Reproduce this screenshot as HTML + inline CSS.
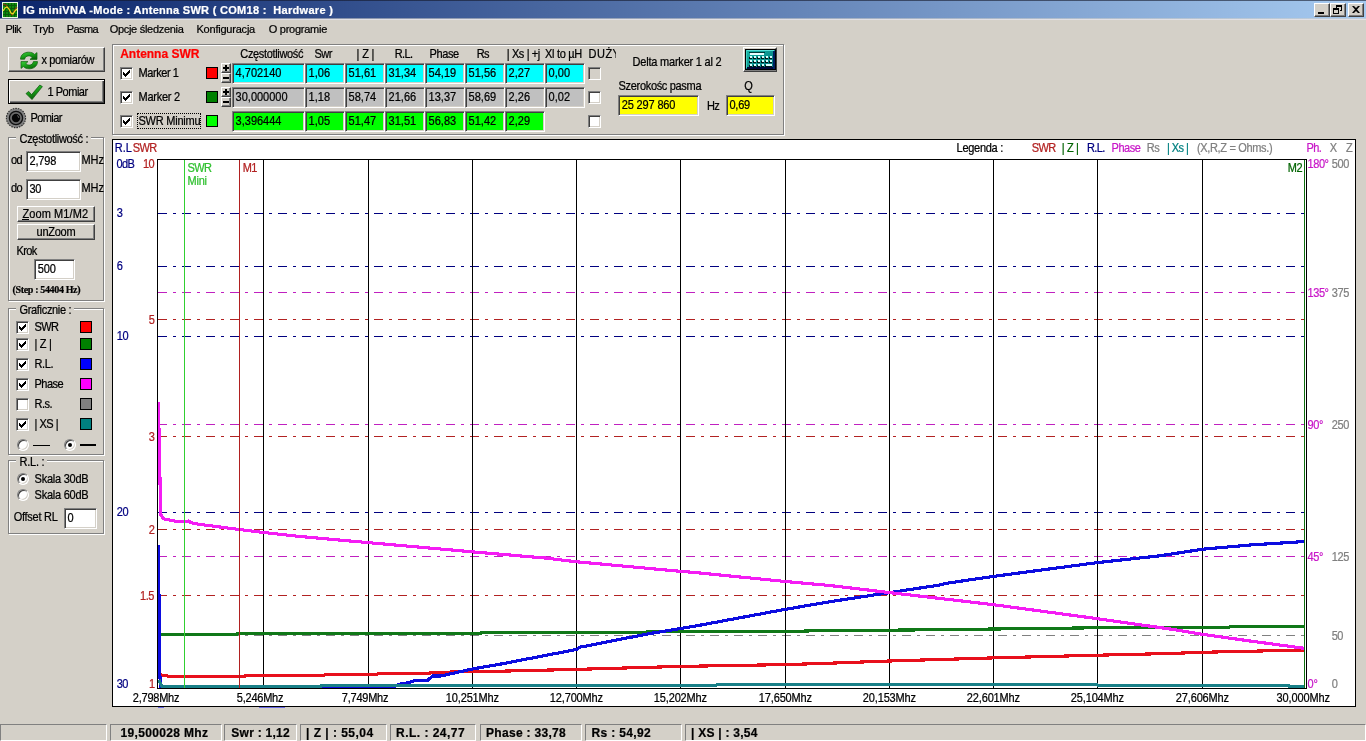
<!DOCTYPE html>
<html><head><meta charset="utf-8"><title>IG miniVNA</title>
<style>
html,body{margin:0;padding:0}
body{width:1366px;height:741px;overflow:hidden;position:relative;background:#d4d0c8;font-family:"Liberation Sans",sans-serif;font-size:11px}
body>div{position:absolute;box-sizing:border-box}
span.t{position:absolute;white-space:pre;-webkit-text-stroke:0.22px}
span.s{transform:scaleY(1.125);transform-origin:0 9px}
#title{left:0;top:0;width:1366px;height:18px;background:linear-gradient(to right,#0a246a 0%,#a6caf0 100%);border-top:1px solid rgba(20,24,40,.6)}
.capbtn{width:16px;height:14px;background:#d4d0c8;border:1px solid;border-color:#fff #404040 #404040 #fff;box-shadow:inset -1px -1px 0 #808080}
.capbtn svg{position:absolute;left:1px;top:1px}
.btn{background:#d4d0c8;border:1px solid;border-color:#fff #404040 #404040 #fff;box-shadow:inset -1px -1px 0 #808080,inset 1px 1px 0 #d4d0c8}
.btn.dflt{border:1px solid #000;box-shadow:inset 1px 1px 0 #fff,inset -1px -1px 0 #404040,inset -2px -2px 0 #808080}
.btn.thin{box-shadow:inset -1px -1px 0 #808080}
.edit,.fld{background:#fff;border:1px solid;border-color:#808080 #fff #fff #808080;box-shadow:inset 1px 1px 0 #404040,inset -1px -1px 0 #d4d0c8}
.grp,.etch{border:1px solid #808080;box-shadow:1px 1px 0 #fff,inset 1px 1px 0 #fff}
.grplblbg{background:#d4d0c8}
.cb{width:13px;height:13px;background:#fff;border:1px solid;border-color:#808080 #fff #fff #808080;box-shadow:inset 1px 1px 0 #404040,inset -1px -1px 0 #d4d0c8}
.cb.dis{background:#d4d0c8}
.cb svg{position:absolute;left:2px;top:2px}
.sw{width:12px;height:12px;border:1px solid #000}
.radio{width:12px;height:12px;border-radius:50%;background:#fff;border:1px solid;border-color:#808080 #fff #fff #808080;box-shadow:inset 1px 1px 0 #404040,inset -1px -1px 0 #d4d0c8}
.radio .dot{position:absolute;left:3px;top:3px;width:4px;height:4px;border-radius:50%;background:#000}
.spin{width:10px;height:20px}
.spin .sb{position:relative;box-sizing:border-box;width:10px;height:10px;background:#d4d0c8;border:1px solid;border-color:#fff #404040 #404040 #fff;box-shadow:inset -1px -1px 0 #808080}
.spin i{position:absolute;background:#000;display:block}
.spin i.ph{left:1px;top:3px;width:6px;height:2px}
.spin i.pv{left:3px;top:1px;width:2px;height:6px}
.focus{border:1px dotted #000}
.sp{border:1px solid;border-color:#808080 #fff #fff #808080}
.calc{width:34px;height:25px;background:#d4d0c8;border:1px solid;border-color:#fff #404040 #404040 #fff;box-shadow:inset -1px -1px 0 #808080}
#chart{position:absolute;left:112px;top:139px}
#title2{left:0;top:18px;width:1366px;height:1px;background:linear-gradient(to right,#0a246a 0%,#a6caf0 100%);opacity:.45}
#title3{left:0;top:19px;width:1366px;height:1px;background:#e2e0e4}
#tx{left:0;top:0;width:1366px;height:741px;will-change:transform}

</style></head>
<body>
<div id="title"></div><div id="title2"></div><div id="title3"></div>
<svg id="appicon" width="16" height="16" viewBox="0 0 16 16" style="position:absolute;left:2px;top:2px">
<rect x="0" y="0" width="16" height="16" fill="#0c8a0c"/>
<g stroke="#0a5a0a" stroke-width="1"><path d="M3.5 0V16M6.5 0V16M9.5 0V16M12.5 0V16M0 3.5H16M0 6.5H16M0 9.5H16M0 12.5H16"/></g>
<rect x="0.5" y="0.5" width="15" height="15" fill="none" stroke="#e8f8e0"/>
<path d="M1 2 L4 3 L7 7 L10 13 L12 9 L15 5" fill="none" stroke="#8a3a10" stroke-width="1.2"/>
<path d="M1 9 L3 6 L5 5 L7 7 L9 11 L11 12 L13 9 L15 7" fill="none" stroke="#e8e020" stroke-width="1.2"/>
</svg>
<div class="capbtn" style="left:1314px;top:3px"><svg width="12" height="10" viewBox="0 0 12 10"><rect x="2" y="7" width="6" height="2" fill="#000"/></svg></div>
<div class="capbtn" style="left:1330px;top:3px"><svg width="12" height="10" viewBox="0 0 12 10"><path d="M4 0h6v6h-2v-1h1v-3h-4v1h-1z" fill="#000"/><path d="M1 3h6v6h-6z M2 5v3h4v-3z" fill="#000" fill-rule="evenodd"/></svg></div>
<div class="capbtn" style="left:1348px;top:3px"><svg width="12" height="10" viewBox="0 0 12 10"><path d="M2 1h2l2 2 2-2h2l-3 3.5 3 3.5h-2l-2-2-2 2h-2l3-3.5z" fill="#000"/></svg></div>
<div class="btn" style="left:8px;top:47px;width:97px;height:25px;"></div>
<div class="btn dflt" style="left:8px;top:79px;width:97px;height:25px;"></div>
<div class="grp" style="left:8px;top:137px;width:96px;height:164px"></div>
<div class="grplblbg" style="left:16.0px;top:137px;width:75px;height:2px"></div>
<div class="grp" style="left:8px;top:308px;width:96px;height:147px"></div>
<div class="grplblbg" style="left:16.0px;top:308px;width:58px;height:2px"></div>
<div class="grp" style="left:8px;top:460px;width:96px;height:74px"></div>
<div class="grplblbg" style="left:16.0px;top:460px;width:31px;height:2px"></div>
<div class="edit" style="left:26px;top:151px;width:55px;height:21px;"></div>
<div class="edit" style="left:26px;top:179px;width:55px;height:21px;"></div>
<div class="btn thin" style="left:17px;top:206px;width:78px;height:16px;"></div>
<div class="btn thin" style="left:17px;top:224px;width:78px;height:16px;"></div>
<div style="position:absolute;left:22px;top:219px;width:7px;height:1px;background:#000"></div>
<div class="edit" style="left:34px;top:259px;width:41px;height:21px;"></div>
<div class="cb" style="left:16px;top:321px"><svg width="7" height="7" viewBox="0 0 7 7" shape-rendering="crispEdges"><path d="M0 2h1v1h1v1h1v-1h1v-1h1v-1h1v-1h1v3h-1v1h-1v1h-1v1h-1v1h-1v-1h-1v-1h-1z" fill="#000"/></svg></div>
<div class="sw" style="left:80px;top:321px;background:#ff0000"></div>
<div class="cb" style="left:16px;top:338px"><svg width="7" height="7" viewBox="0 0 7 7" shape-rendering="crispEdges"><path d="M0 2h1v1h1v1h1v-1h1v-1h1v-1h1v-1h1v3h-1v1h-1v1h-1v1h-1v1h-1v-1h-1v-1h-1z" fill="#000"/></svg></div>
<div class="sw" style="left:80px;top:338px;background:#008000"></div>
<div class="cb" style="left:16px;top:358px"><svg width="7" height="7" viewBox="0 0 7 7" shape-rendering="crispEdges"><path d="M0 2h1v1h1v1h1v-1h1v-1h1v-1h1v-1h1v3h-1v1h-1v1h-1v1h-1v1h-1v-1h-1v-1h-1z" fill="#000"/></svg></div>
<div class="sw" style="left:80px;top:358px;background:#0000ff"></div>
<div class="cb" style="left:16px;top:378px"><svg width="7" height="7" viewBox="0 0 7 7" shape-rendering="crispEdges"><path d="M0 2h1v1h1v1h1v-1h1v-1h1v-1h1v-1h1v3h-1v1h-1v1h-1v1h-1v1h-1v-1h-1v-1h-1z" fill="#000"/></svg></div>
<div class="sw" style="left:80px;top:378px;background:#ff00ff"></div>
<div class="cb" style="left:16px;top:398px"></div>
<div class="sw" style="left:80px;top:398px;background:#808080"></div>
<div class="cb" style="left:16px;top:418px"><svg width="7" height="7" viewBox="0 0 7 7" shape-rendering="crispEdges"><path d="M0 2h1v1h1v1h1v-1h1v-1h1v-1h1v-1h1v3h-1v1h-1v1h-1v1h-1v1h-1v-1h-1v-1h-1z" fill="#000"/></svg></div>
<div class="sw" style="left:80px;top:418px;background:#008080"></div>
<div class="radio" style="left:17px;top:439px"></div>
<div class="radio" style="left:64px;top:439px"><div class="dot"></div></div>
<div style="position:absolute;left:33px;top:445px;width:17px;height:1px;background:#000"></div>
<div style="position:absolute;left:80px;top:444px;width:16px;height:2px;background:#000"></div>
<div class="radio" style="left:17px;top:473px"><div class="dot"></div></div>
<div class="radio" style="left:17px;top:489px"></div>
<div class="edit" style="left:64px;top:508px;width:33px;height:21px;"></div>
<svg width="22" height="22" viewBox="0 0 22 22" style="position:absolute;left:5px;top:107px">
<circle cx="11" cy="11" r="9.6" fill="#828282" stroke="#2c2c2c" stroke-width="1.1" stroke-dasharray="1.6 1"/>
<circle cx="11" cy="11" r="6.6" fill="#6c6c6c" stroke="#101010" stroke-width="1.3"/>
<circle cx="11" cy="11" r="4.2" fill="#060606"/>
<path d="M12.2 8.6a2.6 2.6 0 0 1 1.6 2.2" stroke="#7a7a7a" stroke-width="0.9" fill="none"/>
</svg>
<svg width="20" height="19" viewBox="0 0 20 19" style="position:absolute;left:18.5px;top:50.5px">
<defs><linearGradient id="rg" x1="0" y1="0" x2="0.6" y2="1"><stop offset="0" stop-color="#3fd23f"/><stop offset="0.55" stop-color="#18a018"/><stop offset="1" stop-color="#0a6a0a"/></linearGradient></defs>
<path d="M1.5 8.2 C1.5 3.8 5.2 1.2 9.6 1.2 C12.2 1.2 14.2 2 15.6 3.4 L18 1.6 V8.4 H11 L13.2 6.4 C12.3 5.4 11.2 4.9 9.8 4.9 C7.6 4.9 6 6.1 5.6 8.2 Z" fill="url(#rg)" stroke="#0b5f0b" stroke-width="0.7"/>
<path d="M18.5 10.6 C18.5 15 14.8 17.8 10.4 17.8 C7.8 17.8 5.8 17 4.4 15.6 L2 17.4 V10.6 H9 L6.8 12.6 C7.7 13.6 8.8 14.1 10.2 14.1 C12.4 14.1 14 12.9 14.4 10.6 Z" fill="url(#rg)" stroke="#0b5f0b" stroke-width="0.7"/>
</svg>
<svg width="19" height="17" viewBox="0 0 19 17" style="position:absolute;left:25px;top:83.5px">
<defs><linearGradient id="kg" x1="0" y1="0" x2="0.3" y2="1"><stop offset="0" stop-color="#35c835"/><stop offset="0.6" stop-color="#169616"/><stop offset="1" stop-color="#0a5c0a"/></linearGradient></defs>
<path d="M1 9.6 L3.6 7.4 L6.6 10.6 L14.8 1 L17.4 2.6 L7 15.6 Z" fill="url(#kg)" stroke="#0a520a" stroke-width="0.7"/>
</svg>
<div class="etch" style="left:112px;top:44px;width:672px;height:91px"></div>
<div style="position:absolute;left:588px;top:46px;width:28px;height:14px;overflow:hidden"></div>
<div class="cb" style="left:120px;top:67px"><svg width="7" height="7" viewBox="0 0 7 7" shape-rendering="crispEdges"><path d="M0 2h1v1h1v1h1v-1h1v-1h1v-1h1v-1h1v3h-1v1h-1v1h-1v1h-1v1h-1v-1h-1v-1h-1z" fill="#000"/></svg></div>
<div class="sw" style="left:206px;top:67px;background:#ff0000"></div>
<div class="spin" style="left:221px;top:63px"><div class="sb"><i class="ph"></i><i class="pv"></i></div><div class="sb"><i class="ph"></i></div></div>
<div class="fld" style="left:232px;top:63px;width:73px;height:21px;background:#00ffff"></div>
<div class="fld" style="left:305px;top:63px;width:40px;height:21px;background:#00ffff"></div>
<div class="fld" style="left:345px;top:63px;width:40px;height:21px;background:#00ffff"></div>
<div class="fld" style="left:385px;top:63px;width:40px;height:21px;background:#00ffff"></div>
<div class="fld" style="left:425px;top:63px;width:40px;height:21px;background:#00ffff"></div>
<div class="fld" style="left:465px;top:63px;width:40px;height:21px;background:#00ffff"></div>
<div class="fld" style="left:505px;top:63px;width:40px;height:21px;background:#00ffff"></div>
<div class="fld" style="left:545px;top:63px;width:40px;height:21px;background:#00ffff"></div>
<div class="cb dis" style="left:588px;top:67px"></div>
<div class="cb" style="left:120px;top:91px"><svg width="7" height="7" viewBox="0 0 7 7" shape-rendering="crispEdges"><path d="M0 2h1v1h1v1h1v-1h1v-1h1v-1h1v-1h1v3h-1v1h-1v1h-1v1h-1v1h-1v-1h-1v-1h-1z" fill="#000"/></svg></div>
<div class="sw" style="left:206px;top:91px;background:#008000"></div>
<div class="spin" style="left:221px;top:87px"><div class="sb"><i class="ph"></i><i class="pv"></i></div><div class="sb"><i class="ph"></i></div></div>
<div class="fld" style="left:232px;top:87px;width:73px;height:21px;background:#c0c0c0"></div>
<div class="fld" style="left:305px;top:87px;width:40px;height:21px;background:#c0c0c0"></div>
<div class="fld" style="left:345px;top:87px;width:40px;height:21px;background:#c0c0c0"></div>
<div class="fld" style="left:385px;top:87px;width:40px;height:21px;background:#c0c0c0"></div>
<div class="fld" style="left:425px;top:87px;width:40px;height:21px;background:#c0c0c0"></div>
<div class="fld" style="left:465px;top:87px;width:40px;height:21px;background:#c0c0c0"></div>
<div class="fld" style="left:505px;top:87px;width:40px;height:21px;background:#c0c0c0"></div>
<div class="fld" style="left:545px;top:87px;width:40px;height:21px;background:#c0c0c0"></div>
<div class="cb" style="left:588px;top:91px"></div>
<div class="cb" style="left:120px;top:115px"><svg width="7" height="7" viewBox="0 0 7 7" shape-rendering="crispEdges"><path d="M0 2h1v1h1v1h1v-1h1v-1h1v-1h1v-1h1v3h-1v1h-1v1h-1v1h-1v1h-1v-1h-1v-1h-1z" fill="#000"/></svg></div>
<div class="sw" style="left:206px;top:115px;background:#00ff00"></div>
<div class="fld" style="left:232px;top:111px;width:73px;height:21px;background:#00ff00"></div>
<div class="fld" style="left:305px;top:111px;width:40px;height:21px;background:#00ff00"></div>
<div class="fld" style="left:345px;top:111px;width:40px;height:21px;background:#00ff00"></div>
<div class="fld" style="left:385px;top:111px;width:40px;height:21px;background:#00ff00"></div>
<div class="fld" style="left:425px;top:111px;width:40px;height:21px;background:#00ff00"></div>
<div class="fld" style="left:465px;top:111px;width:40px;height:21px;background:#00ff00"></div>
<div class="fld" style="left:505px;top:111px;width:40px;height:21px;background:#00ff00"></div>
<div class="cb" style="left:588px;top:115px"></div>
<div class="focus" style="left:137px;top:113px;width:64px;height:16px"></div>
<div class="fld" style="left:618px;top:95px;width:81px;height:21px;background:#ffff00"></div>
<div class="fld" style="left:726px;top:95px;width:49px;height:21px;background:#ffff00"></div>
<div class="calc" style="left:743px;top:47px"><svg width="31" height="21" viewBox="0 0 31 21" shape-rendering="crispEdges" style="position:absolute;left:1px;top:1px">
<defs><linearGradient id="cg" x1="0" y1="0" x2="1" y2="1"><stop offset="0" stop-color="#18b8a8"/><stop offset="1" stop-color="#007078"/></linearGradient></defs>
<rect x="0" y="0" width="31" height="21" fill="#000"/>
<rect x="1" y="1" width="29" height="19" fill="url(#cg)"/>
<rect x="1" y="1" width="28" height="1" fill="#58e0d8"/><rect x="1" y="1" width="1" height="18" fill="#40d0c0"/>
<rect x="2" y="18" width="28" height="2" fill="#000838"/><rect x="28" y="2" width="2" height="18" fill="#002060"/>
<rect x="4" y="3" width="16" height="1" fill="#003838"/><rect x="5" y="4" width="14" height="2" fill="#e8ffff"/>
<rect x="4" y="8" width="3" height="2" fill="#001818"/><rect x="5" y="7" width="2" height="2" fill="#d8ffff"/><rect x="8" y="8" width="3" height="2" fill="#001818"/><rect x="9" y="7" width="2" height="2" fill="#d8ffff"/><rect x="12" y="8" width="3" height="2" fill="#001818"/><rect x="13" y="7" width="2" height="2" fill="#d8ffff"/><rect x="16" y="8" width="3" height="2" fill="#001818"/><rect x="17" y="7" width="2" height="2" fill="#d8ffff"/><rect x="20" y="8" width="3" height="2" fill="#001818"/><rect x="21" y="7" width="2" height="2" fill="#d8ffff"/><rect x="24" y="8" width="3" height="2" fill="#001818"/><rect x="25" y="7" width="2" height="2" fill="#d8ffff"/><rect x="4" y="12" width="3" height="2" fill="#001818"/><rect x="5" y="11" width="2" height="2" fill="#d8ffff"/><rect x="8" y="12" width="3" height="2" fill="#001818"/><rect x="9" y="11" width="2" height="2" fill="#d8ffff"/><rect x="12" y="12" width="3" height="2" fill="#001818"/><rect x="13" y="11" width="2" height="2" fill="#d8ffff"/><rect x="16" y="12" width="3" height="2" fill="#001818"/><rect x="17" y="11" width="2" height="2" fill="#d8ffff"/><rect x="20" y="12" width="3" height="2" fill="#001818"/><rect x="21" y="11" width="2" height="2" fill="#d8ffff"/><rect x="24" y="12" width="3" height="2" fill="#001818"/><rect x="25" y="11" width="2" height="2" fill="#d8ffff"/><rect x="4" y="16" width="3" height="2" fill="#001818"/><rect x="5" y="15" width="2" height="2" fill="#d8ffff"/><rect x="8" y="16" width="3" height="2" fill="#001818"/><rect x="9" y="15" width="2" height="2" fill="#d8ffff"/><rect x="12" y="16" width="3" height="2" fill="#001818"/><rect x="13" y="15" width="2" height="2" fill="#d8ffff"/><rect x="16" y="16" width="3" height="2" fill="#001818"/><rect x="17" y="15" width="2" height="2" fill="#d8ffff"/><rect x="20" y="16" width="7" height="2" fill="#001818"/><rect x="21" y="15" width="6" height="2" fill="#d8ffff"/>
</svg></div>
<div class="sp" style="left:0px;top:724px;width:107px;height:17px;"></div>
<div class="sp" style="left:110px;top:724px;width:112px;height:17px;"></div>
<div class="sp" style="left:224px;top:724px;width:73px;height:17px;"></div>
<div class="sp" style="left:300px;top:724px;width:87px;height:17px;"></div>
<div class="sp" style="left:390px;top:724px;width:86px;height:17px;"></div>
<div class="sp" style="left:480px;top:724px;width:102px;height:17px;"></div>
<div class="sp" style="left:585px;top:724px;width:97px;height:17px;"></div>
<div class="sp" style="left:685px;top:724px;width:681px;height:17px;"></div>
<svg id="chart" width="1244" height="568" viewBox="112 139 1244 568">
<rect x="112.5" y="139.5" width="1243" height="567" fill="#fff" stroke="#000" stroke-width="1" shape-rendering="crispEdges"/>
<path d="M158 213.5H1305" stroke="#000080" stroke-width="1" stroke-dasharray="9 6 3 6" shape-rendering="crispEdges" fill="none"/>
<path d="M158 266.5H1305" stroke="#000080" stroke-width="1" stroke-dasharray="9 6 3 6" shape-rendering="crispEdges" fill="none"/>
<path d="M158 336.5H1305" stroke="#000080" stroke-width="1" stroke-dasharray="9 6 3 6" shape-rendering="crispEdges" fill="none"/>
<path d="M158 512.5H1305" stroke="#000080" stroke-width="1" stroke-dasharray="9 6 3 6" shape-rendering="crispEdges" fill="none"/>
<path d="M158 319.5H1305" stroke="#b22222" stroke-width="1" stroke-dasharray="9 6 3 6" shape-rendering="crispEdges" fill="none"/>
<path d="M158 436.5H1305" stroke="#b22222" stroke-width="1" stroke-dasharray="9 6 3 6" shape-rendering="crispEdges" fill="none"/>
<path d="M158 529.5H1305" stroke="#b22222" stroke-width="1" stroke-dasharray="9 6 3 6" shape-rendering="crispEdges" fill="none"/>
<path d="M158 595.5H1305" stroke="#b22222" stroke-width="1" stroke-dasharray="9 6 3 6" shape-rendering="crispEdges" fill="none"/>
<path d="M158 292.5H1305" stroke="#c020c0" stroke-width="1" stroke-dasharray="9 6 3 6" shape-rendering="crispEdges" fill="none"/>
<path d="M158 424.5H1305" stroke="#c020c0" stroke-width="1" stroke-dasharray="9 6 3 6" shape-rendering="crispEdges" fill="none"/>
<path d="M158 556.5H1305" stroke="#c020c0" stroke-width="1" stroke-dasharray="9 6 3 6" shape-rendering="crispEdges" fill="none"/>
<path d="M158 635.5H1305" stroke="#808080" stroke-width="1" stroke-dasharray="9 6 3 6" shape-rendering="crispEdges" fill="none"/>
<path d="M263.5 159V688" stroke="#000" stroke-width="1" shape-rendering="crispEdges"/>
<path d="M368.5 159V688" stroke="#000" stroke-width="1" shape-rendering="crispEdges"/>
<path d="M472.5 159V688" stroke="#000" stroke-width="1" shape-rendering="crispEdges"/>
<path d="M576.5 159V688" stroke="#000" stroke-width="1" shape-rendering="crispEdges"/>
<path d="M680.5 159V688" stroke="#000" stroke-width="1" shape-rendering="crispEdges"/>
<path d="M785.5 159V688" stroke="#000" stroke-width="1" shape-rendering="crispEdges"/>
<path d="M889.5 159V688" stroke="#000" stroke-width="1" shape-rendering="crispEdges"/>
<path d="M993.5 159V688" stroke="#000" stroke-width="1" shape-rendering="crispEdges"/>
<path d="M1097.5 159V688" stroke="#000" stroke-width="1" shape-rendering="crispEdges"/>
<path d="M1202.5 159V688" stroke="#000" stroke-width="1" shape-rendering="crispEdges"/>
<clipPath id="pc"><rect x="158" y="160" width="1148" height="528"/></clipPath><g clip-path="url(#pc)">
<polyline points="158.5,668 160,674 162,675.5 167,675.5 168,676.5 244,676.5 246,675.5 323.5,675.5 325.5,674.5 376.5,674.5 378.5,673.5 429,673.5 431,672.5 472,671.6 500,671.2 576,669.4 681,666.4 785,664.6 830,663.2 889.6,661 993.5,657.9 1097.4,655.2 1170,653.5 1202,652.3 1305,650" fill="none" stroke="#e8101c" stroke-width="3.15" stroke-linejoin="round" shape-rendering="crispEdges"/>
<polyline points="160,634.5 236,634.5 238,633.5 480,633.5 482,632.5 646,632.5 648,631.5 790,631.5 820,630.6 910,630 1020,628.7 1120,627.5 1228,627.5 1232,626.5 1305,626.5" fill="none" stroke="#107818" stroke-width="3.15" stroke-linejoin="round" shape-rendering="crispEdges"/>
<polyline points="158.5,545 159,600 159.5,667 160.5,687 393,687.2 398,684.5 409,682.6 415,680.4 427.4,680.4 432.7,676 440.6,676 472.2,669 500,664.2 576.4,649.5 580,647.2 650,633.5 681,628.5 700,625.2 785.5,609.3 830,601.7 889.6,592.6 940,585 945,583.5 993.5,576.4 1097.4,562.6 1160,555.8 1202,549.3 1250,545 1305,541.5" fill="none" stroke="#0c0ce0" stroke-width="3.15" stroke-linejoin="round" shape-rendering="crispEdges"/>
<polyline points="158.5,402 159,431 160,480 160.5,512 161,515 162.5,517.5 164,519 170,520.2 177,521.4 185,522 188,521 192,523 198.6,524.3 210,525.7 239,529.5 263,532.4 300,536.5 368,542.6 472,551.8 500,554.2 545,558 576.4,561.8 680.5,571.3 700,573 785.5,581.5 830,585.5 889.6,592.6 993.5,604.7 1097.4,618.7 1170,629 1202,634.2 1250,641 1305,648.4" fill="none" stroke="#f41cf4" stroke-width="3.15" stroke-linejoin="round" shape-rendering="crispEdges"/>
<polyline points="159,680 162,686.5 320,686.5 322,685.5 715,685.5 717,684.6 1097,684.6 1099,685.5 1288,685.5 1290,686.5 1305,686.5" fill="none" stroke="#188088" stroke-width="3.15" stroke-linejoin="round" shape-rendering="crispEdges"/>
</g>
<path d="M157.5 689V159.5H1306.5V689" stroke="#000" stroke-width="1" fill="none" shape-rendering="crispEdges"/>
<path d="M157 688.5H1307" stroke="#000" stroke-width="1" fill="none" shape-rendering="crispEdges"/>
<path d="M184.5 160V688" stroke="#30d030" stroke-width="1" shape-rendering="crispEdges"/>
<path d="M239.5 160V688" stroke="#b02020" stroke-width="1" shape-rendering="crispEdges"/>
<path d="M1304.5 160V688" stroke="#107010" stroke-width="1" shape-rendering="crispEdges"/>
</svg>
<div style="left:158px;top:707px;width:6px;height:1px;background:#6a6ae8"></div><div style="left:259px;top:707px;width:26px;height:1px;background:#6a6ae8"></div>
<div id="tx">
<span class="t" style="left:23.0px;top:5px;font-size:11px;line-height:11px;color:#fff;font-weight:bold;letter-spacing:0.291px;">IG miniVNA -Mode : Antenna SWR ( COM18 :  Hardware )</span>
<span class="t" style="left:5.6px;top:24px;font-size:11px;line-height:11px;color:#000;letter-spacing:-0.600px;">Plik</span>
<span class="t" style="left:33.0px;top:24px;font-size:11px;line-height:11px;color:#000;letter-spacing:-0.158px;">Tryb</span>
<span class="t" style="left:66.8px;top:24px;font-size:11px;line-height:11px;color:#000;letter-spacing:-0.600px;">Pasma</span>
<span class="t" style="left:109.7px;top:24px;font-size:11px;line-height:11px;color:#000;letter-spacing:-0.296px;">Opcje śledzenia</span>
<span class="t" style="left:196.5px;top:24px;font-size:11px;line-height:11px;color:#000;letter-spacing:-0.221px;">Konfiguracja</span>
<span class="t" style="left:268.7px;top:24px;font-size:11px;line-height:11px;color:#000;letter-spacing:-0.252px;">O programie</span>
<span class="t s" style="left:41.5px;top:55px;font-size:11px;line-height:11px;color:#000;letter-spacing:-0.366px;">x pomiarów</span>
<span class="t s" style="left:47.5px;top:87px;font-size:11px;line-height:11px;color:#000;letter-spacing:-0.479px;">1 Pomiar</span>
<span class="t s" style="left:30.5px;top:112.5px;font-size:11px;line-height:11px;color:#000;letter-spacing:-0.600px;">Pomiar</span>
<span class="t s" style="left:19.5px;top:134px;font-size:11px;line-height:11px;color:#000;letter-spacing:-0.307px;">Częstotliwość :</span>
<span class="t s" style="left:19.5px;top:305px;font-size:11px;line-height:11px;color:#000;letter-spacing:-0.325px;">Graficznie :</span>
<span class="t s" style="left:19.5px;top:457px;font-size:11px;line-height:11px;color:#000;letter-spacing:-0.246px;">R.L. :</span>
<span class="t s" style="left:11.0px;top:155px;font-size:11px;line-height:11px;color:#000;letter-spacing:-0.600px;">od</span>
<span class="t s" style="left:11.0px;top:183px;font-size:11px;line-height:11px;color:#000;letter-spacing:-0.600px;">do</span>
<span class="t s" style="left:29.5px;top:156px;font-size:11px;line-height:11px;color:#000;letter-spacing:-0.177px;">2,798</span>
<span class="t s" style="left:29.5px;top:184px;font-size:11px;line-height:11px;color:#000;letter-spacing:-0.318px;">30</span>
<span class="t s" style="left:81.4px;top:155px;font-size:11px;line-height:11px;color:#000;letter-spacing:-0.053px;">MHz</span>
<span class="t s" style="left:81.4px;top:183px;font-size:11px;line-height:11px;color:#000;letter-spacing:-0.053px;">MHz</span>
<span class="t s" style="left:22.4px;top:209px;font-size:11px;line-height:11px;color:#000;letter-spacing:0.103px;">Zoom M1/M2</span>
<span class="t s" style="left:36.5px;top:227px;font-size:11px;line-height:11px;color:#000;letter-spacing:-0.238px;">unZoom</span>
<span class="t s" style="left:16.5px;top:245.5px;font-size:11px;line-height:11px;color:#000;letter-spacing:-0.600px;">Krok</span>
<span class="t s" style="left:37.7px;top:264px;font-size:11px;line-height:11px;color:#000;letter-spacing:-0.118px;">500</span>
<span class="t" style="left:12.6px;top:285px;font-size:10px;line-height:10px;color:#000;font-weight:bold;font-family:'Liberation Serif',serif;letter-spacing:-0.354px;">(Step : 54404 Hz)</span>
<span class="t s" style="left:34.5px;top:321.5px;font-size:11px;line-height:11px;color:#000;letter-spacing:-0.600px;">SWR</span>
<span class="t s" style="left:34.5px;top:338.5px;font-size:11px;line-height:11px;color:#000;letter-spacing:-0.272px;">| Z |</span>
<span class="t s" style="left:34.5px;top:358.5px;font-size:11px;line-height:11px;color:#000;letter-spacing:-0.373px;">R.L.</span>
<span class="t s" style="left:34.5px;top:378.5px;font-size:11px;line-height:11px;color:#000;letter-spacing:-0.518px;">Phase</span>
<span class="t s" style="left:34.5px;top:398.5px;font-size:11px;line-height:11px;color:#000;letter-spacing:-0.500px;">R.s.</span>
<span class="t s" style="left:34.5px;top:418.5px;font-size:11px;line-height:11px;color:#000;letter-spacing:-0.469px;">| XS |</span>
<span class="t s" style="left:34.6px;top:473.5px;font-size:11px;line-height:11px;color:#000;letter-spacing:-0.247px;">Skala 30dB</span>
<span class="t s" style="left:34.6px;top:489.5px;font-size:11px;line-height:11px;color:#000;letter-spacing:-0.247px;">Skala 60dB</span>
<span class="t s" style="left:13.7px;top:511.6px;font-size:11px;line-height:11px;color:#000;letter-spacing:-0.268px;">Offset RL</span>
<span class="t s" style="left:67.5px;top:513px;font-size:11px;line-height:11px;color:#000;">0</span>
<span class="t" style="left:120.2px;top:48px;font-size:12px;line-height:12px;color:#ff0000;font-weight:bold;letter-spacing:-0.016px;">Antenna SWR</span>
<span class="t s" style="left:240.3px;top:49px;font-size:11px;line-height:11px;color:#000;letter-spacing:-0.337px;">Częstotliwość</span>
<span class="t s" style="left:314.6px;top:49px;font-size:11px;line-height:11px;color:#000;letter-spacing:-0.600px;">Swr</span>
<span class="t s" style="left:356.6px;top:49px;font-size:11px;line-height:11px;color:#000;letter-spacing:-0.172px;">| Z |</span>
<span class="t s" style="left:394.7px;top:49px;font-size:11px;line-height:11px;color:#000;letter-spacing:-0.600px;">R.L.</span>
<span class="t s" style="left:429.5px;top:49px;font-size:11px;line-height:11px;color:#000;letter-spacing:-0.393px;">Phase</span>
<span class="t s" style="left:476.7px;top:49px;font-size:11px;line-height:11px;color:#000;letter-spacing:-0.600px;">Rs</span>
<span class="t s" style="left:506.8px;top:49px;font-size:11px;line-height:11px;color:#000;letter-spacing:-0.393px;">| Xs | +j</span>
<span class="t s" style="left:545.0px;top:49px;font-size:11px;line-height:11px;color:#000;letter-spacing:-0.315px;">Xl to µH</span>
<span class="t s" style="left:588.6px;top:49px;font-size:11px;line-height:11px;color:#000;letter-spacing:0.464px;width:27.6px;overflow:hidden;padding-top:3px;margin-top:-3px;">DUŻY</span>
<span class="t s" style="left:138.5px;top:68px;font-size:11px;line-height:11px;color:#000;letter-spacing:-0.426px;">Marker 1</span>
<span class="t s" style="left:235.6px;top:68px;font-size:11px;line-height:11px;color:#000;">4,702140</span>
<span class="t s" style="left:308.6px;top:68px;font-size:11px;line-height:11px;color:#000;">1,06</span>
<span class="t s" style="left:348.6px;top:68px;font-size:11px;line-height:11px;color:#000;">51,61</span>
<span class="t s" style="left:388.6px;top:68px;font-size:11px;line-height:11px;color:#000;">31,34</span>
<span class="t s" style="left:428.6px;top:68px;font-size:11px;line-height:11px;color:#000;">54,19</span>
<span class="t s" style="left:468.6px;top:68px;font-size:11px;line-height:11px;color:#000;">51,56</span>
<span class="t s" style="left:508.6px;top:68px;font-size:11px;line-height:11px;color:#000;">2,27</span>
<span class="t s" style="left:548.6px;top:68px;font-size:11px;line-height:11px;color:#000;">0,00</span>
<span class="t s" style="left:138.5px;top:92px;font-size:11px;line-height:11px;color:#000;letter-spacing:-0.254px;">Marker 2</span>
<span class="t s" style="left:235.6px;top:92px;font-size:11px;line-height:11px;color:#000;">30,000000</span>
<span class="t s" style="left:308.6px;top:92px;font-size:11px;line-height:11px;color:#000;">1,18</span>
<span class="t s" style="left:348.6px;top:92px;font-size:11px;line-height:11px;color:#000;">58,74</span>
<span class="t s" style="left:388.6px;top:92px;font-size:11px;line-height:11px;color:#000;">21,66</span>
<span class="t s" style="left:428.6px;top:92px;font-size:11px;line-height:11px;color:#000;">13,37</span>
<span class="t s" style="left:468.6px;top:92px;font-size:11px;line-height:11px;color:#000;">58,69</span>
<span class="t s" style="left:508.6px;top:92px;font-size:11px;line-height:11px;color:#000;">2,26</span>
<span class="t s" style="left:548.6px;top:92px;font-size:11px;line-height:11px;color:#000;">0,02</span>
<span class="t s" style="left:138.5px;top:116px;font-size:11px;line-height:11px;color:#000;letter-spacing:-0.228px;">SWR Minimu</span>
<span class="t s" style="left:235.6px;top:116px;font-size:11px;line-height:11px;color:#000;">3,396444</span>
<span class="t s" style="left:308.6px;top:116px;font-size:11px;line-height:11px;color:#000;">1,05</span>
<span class="t s" style="left:348.6px;top:116px;font-size:11px;line-height:11px;color:#000;">51,47</span>
<span class="t s" style="left:388.6px;top:116px;font-size:11px;line-height:11px;color:#000;">31,51</span>
<span class="t s" style="left:428.6px;top:116px;font-size:11px;line-height:11px;color:#000;">56,83</span>
<span class="t s" style="left:468.6px;top:116px;font-size:11px;line-height:11px;color:#000;">51,42</span>
<span class="t s" style="left:508.6px;top:116px;font-size:11px;line-height:11px;color:#000;">2,29</span>
<span class="t s" style="left:632.6px;top:57px;font-size:11px;line-height:11px;color:#000;letter-spacing:-0.212px;">Delta marker 1 al 2</span>
<span class="t s" style="left:618.6px;top:81px;font-size:11px;line-height:11px;color:#000;letter-spacing:-0.322px;">Szerokośc pasma</span>
<span class="t s" style="left:744.3px;top:81px;font-size:11px;line-height:11px;color:#000;">Q</span>
<span class="t s" style="left:621.8px;top:100px;font-size:11px;line-height:11px;color:#000;letter-spacing:-0.160px;">25 297 860</span>
<span class="t s" style="left:706.9px;top:101px;font-size:11px;line-height:11px;color:#000;letter-spacing:-0.544px;">Hz</span>
<span class="t s" style="left:729.5px;top:100px;font-size:11px;line-height:11px;color:#000;letter-spacing:-0.264px;">0,69</span>
<span class="t" style="left:120.6px;top:727px;font-size:12px;line-height:12px;color:#000;font-weight:bold;letter-spacing:0.335px;">19,500028 Mhz</span>
<span class="t" style="left:231.3px;top:727px;font-size:12px;line-height:12px;color:#000;font-weight:bold;letter-spacing:0.261px;">Swr : 1,12</span>
<span class="t" style="left:306.0px;top:727px;font-size:12px;line-height:12px;color:#000;font-weight:bold;letter-spacing:0.472px;">| Z | : 55,04</span>
<span class="t" style="left:396.0px;top:727px;font-size:12px;line-height:12px;color:#000;font-weight:bold;letter-spacing:0.483px;">R.L. : 24,77</span>
<span class="t" style="left:486.0px;top:727px;font-size:12px;line-height:12px;color:#000;font-weight:bold;letter-spacing:0.302px;">Phase : 33,78</span>
<span class="t" style="left:591.4px;top:727px;font-size:12px;line-height:12px;color:#000;font-weight:bold;letter-spacing:0.360px;">Rs : 54,92</span>
<span class="t" style="left:691.0px;top:727px;font-size:12px;line-height:12px;color:#000;font-weight:bold;letter-spacing:0.247px;">| XS | : 3,54</span>
<span class="t s" style="left:114.7px;top:143px;font-size:11px;line-height:11px;color:#000080;letter-spacing:0.000px;">R.L</span>
<span class="t s" style="left:132.8px;top:143px;font-size:11px;line-height:11px;color:#b22222;letter-spacing:-0.600px;">SWR</span>
<span class="t s" style="left:116.5px;top:159px;font-size:11px;line-height:11px;color:#000080;letter-spacing:-0.600px;">0dB</span>
<span class="t s" style="left:143.0px;top:159px;font-size:11px;line-height:11px;color:#b22222;letter-spacing:-0.600px;">10</span>
<span class="t s" style="left:116.8px;top:208px;font-size:11px;line-height:11px;color:#000080;">3</span>
<span class="t s" style="left:116.8px;top:261px;font-size:11px;line-height:11px;color:#000080;">6</span>
<span class="t s" style="left:116.8px;top:331px;font-size:11px;line-height:11px;color:#000080;letter-spacing:-0.418px;">10</span>
<span class="t s" style="left:116.8px;top:507px;font-size:11px;line-height:11px;color:#000080;letter-spacing:-0.418px;">20</span>
<span class="t s" style="left:116.8px;top:679px;font-size:11px;line-height:11px;color:#000080;letter-spacing:-0.600px;">30</span>
<span class="t s" style="left:148.7px;top:315px;font-size:11px;line-height:11px;color:#b22222;">5</span>
<span class="t s" style="left:148.7px;top:432px;font-size:11px;line-height:11px;color:#b22222;">3</span>
<span class="t s" style="left:148.7px;top:525px;font-size:11px;line-height:11px;color:#b22222;">2</span>
<span class="t s" style="left:140.0px;top:591px;font-size:11px;line-height:11px;color:#b22222;letter-spacing:-0.487px;">1.5</span>
<span class="t s" style="left:149.0px;top:679px;font-size:11px;line-height:11px;color:#b22222;">1</span>
<span class="t s" style="left:1307.6px;top:159px;font-size:11px;line-height:11px;color:#c818c8;letter-spacing:-0.451px;">180°</span>
<span class="t s" style="left:1331.7px;top:159px;font-size:11px;line-height:11px;color:#808080;letter-spacing:-0.368px;">500</span>
<span class="t s" style="left:1307.6px;top:288px;font-size:11px;line-height:11px;color:#c818c8;letter-spacing:-0.451px;">135°</span>
<span class="t s" style="left:1331.7px;top:288px;font-size:11px;line-height:11px;color:#808080;letter-spacing:-0.368px;">375</span>
<span class="t s" style="left:1307.6px;top:420px;font-size:11px;line-height:11px;color:#c818c8;letter-spacing:-0.368px;">90°</span>
<span class="t s" style="left:1331.7px;top:420px;font-size:11px;line-height:11px;color:#808080;letter-spacing:-0.368px;">250</span>
<span class="t s" style="left:1307.6px;top:552px;font-size:11px;line-height:11px;color:#c818c8;letter-spacing:-0.368px;">45°</span>
<span class="t s" style="left:1331.7px;top:552px;font-size:11px;line-height:11px;color:#808080;letter-spacing:-0.368px;">125</span>
<span class="t s" style="left:1331.7px;top:631px;font-size:11px;line-height:11px;color:#808080;letter-spacing:-0.600px;">50</span>
<span class="t s" style="left:1307.6px;top:679px;font-size:11px;line-height:11px;color:#c818c8;letter-spacing:-0.118px;">0°</span>
<span class="t s" style="left:1331.7px;top:679px;font-size:11px;line-height:11px;color:#808080;">0</span>
<span class="t s" style="left:1306.5px;top:143px;font-size:11px;line-height:11px;color:#c818c8;letter-spacing:-0.600px;">Ph.</span>
<span class="t s" style="left:1329.8px;top:143px;font-size:11px;line-height:11px;color:#808080;">X</span>
<span class="t s" style="left:1346.0px;top:143px;font-size:11px;line-height:11px;color:#808080;">Z</span>
<span class="t s" style="left:1287.7px;top:163px;font-size:11px;line-height:11px;color:#006400;letter-spacing:-0.363px;">M2</span>
<span class="t s" style="left:187.6px;top:163px;font-size:11px;line-height:11px;color:#30c030;letter-spacing:-0.600px;">SWR</span>
<span class="t s" style="left:187.6px;top:176px;font-size:11px;line-height:11px;color:#30c030;letter-spacing:-0.242px;">Mini</span>
<span class="t s" style="left:242.8px;top:163px;font-size:11px;line-height:11px;color:#b22222;letter-spacing:-0.600px;">M1</span>
<span class="t s" style="left:956.6px;top:143px;font-size:11px;line-height:11px;color:#000;letter-spacing:-0.285px;">Legenda :</span>
<span class="t s" style="left:1031.8px;top:143px;font-size:11px;line-height:11px;color:#b22222;letter-spacing:-0.600px;">SWR</span>
<span class="t s" style="left:1061.7px;top:143px;font-size:11px;line-height:11px;color:#006400;letter-spacing:-0.322px;">| Z |</span>
<span class="t s" style="left:1086.9px;top:143px;font-size:11px;line-height:11px;color:#000080;letter-spacing:-0.600px;">R.L.</span>
<span class="t s" style="left:1111.6px;top:143px;font-size:11px;line-height:11px;color:#c818c8;letter-spacing:-0.468px;">Phase</span>
<span class="t s" style="left:1146.8px;top:143px;font-size:11px;line-height:11px;color:#808080;letter-spacing:-0.600px;">Rs</span>
<span class="t s" style="left:1167.0px;top:143px;font-size:11px;line-height:11px;color:#008080;letter-spacing:-0.561px;">| Xs |</span>
<span class="t s" style="left:1196.9px;top:143px;font-size:11px;line-height:11px;color:#808080;letter-spacing:-0.329px;">(X,R,Z = Ohms.)</span>
<span class="t s" style="left:132.8px;top:693px;font-size:11px;line-height:11px;color:#000;letter-spacing:-0.230px;">2,798Mhz</span>
<span class="t s" style="left:236.8px;top:693px;font-size:11px;line-height:11px;color:#000;letter-spacing:-0.230px;">5,246Mhz</span>
<span class="t s" style="left:341.8px;top:693px;font-size:11px;line-height:11px;color:#000;letter-spacing:-0.230px;">7,749Mhz</span>
<span class="t s" style="left:445.8px;top:693px;font-size:11px;line-height:11px;color:#000;letter-spacing:-0.141px;">10,251Mhz</span>
<span class="t s" style="left:549.8px;top:693px;font-size:11px;line-height:11px;color:#000;letter-spacing:-0.141px;">12,700Mhz</span>
<span class="t s" style="left:653.8px;top:693px;font-size:11px;line-height:11px;color:#000;letter-spacing:-0.141px;">15,202Mhz</span>
<span class="t s" style="left:758.8px;top:693px;font-size:11px;line-height:11px;color:#000;letter-spacing:-0.141px;">17,650Mhz</span>
<span class="t s" style="left:862.8px;top:693px;font-size:11px;line-height:11px;color:#000;letter-spacing:-0.141px;">20,153Mhz</span>
<span class="t s" style="left:966.8px;top:693px;font-size:11px;line-height:11px;color:#000;letter-spacing:-0.141px;">22,601Mhz</span>
<span class="t s" style="left:1070.8px;top:693px;font-size:11px;line-height:11px;color:#000;letter-spacing:-0.141px;">25,104Mhz</span>
<span class="t s" style="left:1175.8px;top:693px;font-size:11px;line-height:11px;color:#000;letter-spacing:-0.141px;">27,606Mhz</span>
<span class="t s" style="left:1276.6px;top:693px;font-size:11px;line-height:11px;color:#000;letter-spacing:-0.141px;">30,000Mhz</span>
</div>
</body></html>
